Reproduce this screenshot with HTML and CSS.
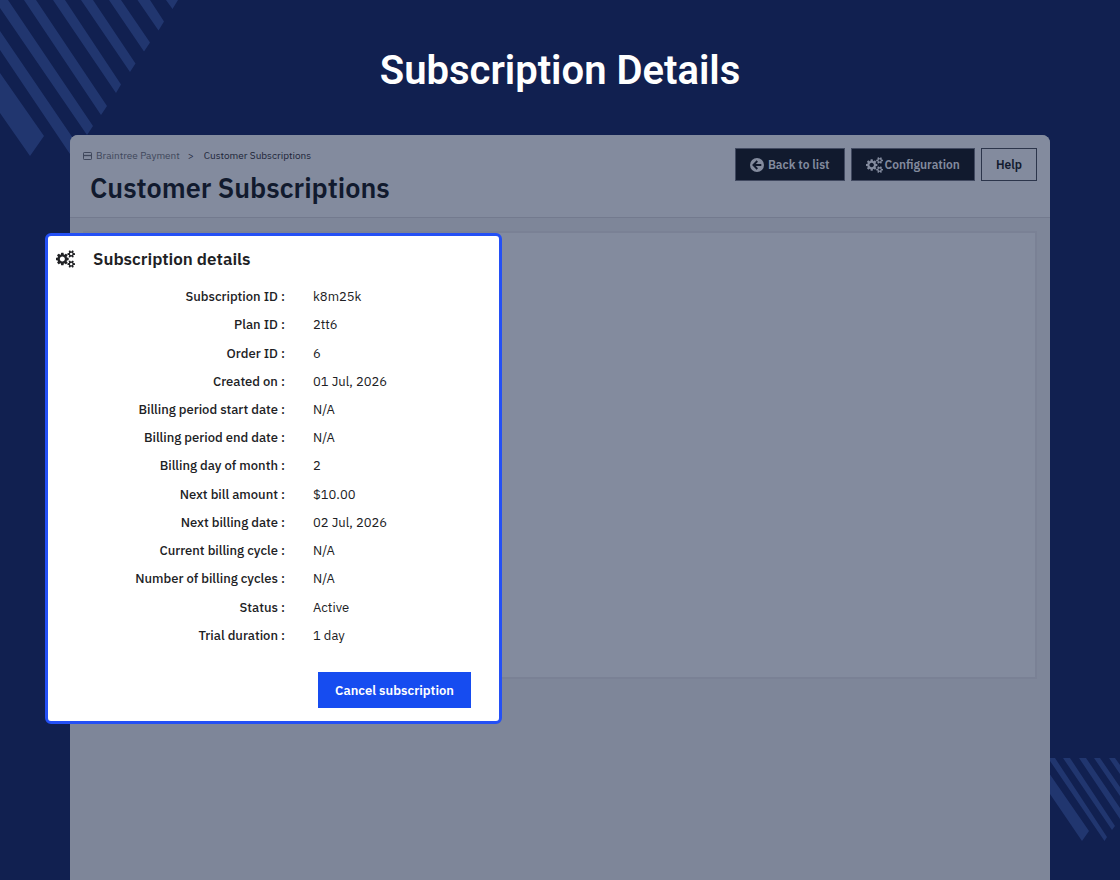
FILE: index.html
```html
<!DOCTYPE html>
<html lang="en">
<head>
<meta charset="utf-8">
<title>Subscription Details</title>
<link rel="stylesheet" href="styles.css">
</head>
<body>
<svg class="symbols" aria-hidden="true">
  <symbol id="cogs" viewBox="0 0 1920 1792"><path fill="currentColor" d="M896 896q0-106-75-181t-181-75-181 75-75 181 75 181 181 75 181-75 75-181zm768 512q0-52-38-90t-90-38-90 38-38 90q0 53 37.500 90.500t90.500 37.500 90.500-37.500 37.500-90.500zm0-1024q0-52-38-90t-90-38-90 38-38 90q0 53 37.500 90.500t90.500 37.500 90.500-37.500 37.500-90.500zm-384 421v185q0 10-7 19.500t-16 10.500l-155 24q-11 35-32 76 34 48 90 115 7 11 7 20 0 12-7 19-23 30-82.500 89.500t-78.500 59.500q-11 0-21-7l-115-90q-37 19-77 31-11 108-23 155-7 24-30 24h-186q-11 0-20-7.500t-10-17.500l-23-153q-34-10-75-31l-118 89q-7 7-20 7-11 0-21-8-144-133-144-160 0-9 7-19 10-14 41-53t47-61q-23-44-35-82l-152-24q-10-1-17-9.500t-7-19.500v-185q0-10 7-19.500t16-10.500l155-24q11-35 32-76-34-48-90-115-7-11-7-20 0-12 7-20 22-30 82-89t79-59q11 0 21 7l115 90q34-18 77-32 11-108 23-154 7-24 30-24h186q11 0 20 7.500t10 17.500l23 153q34 10 75 31l118-89q8-7 20-7 11 0 21 8 144 133 144 160 0 8-7 19-12 16-42 54t-45 60q23 48 34 82l152 23q10 2 17 10.500t7 19.500zm640 533v140q0 16-149 31-12 27-30 52 51 113 51 138 0 4-4 7-122 71-124 71-8 0-46-47t-52-68q-20 2-30 2t-30-2q-14 21-52 68t-46 47q-2 0-124-71-4-3-4-7 0-25 51-138-18-25-30-52-149-15-149-31v-140q0-16 149-31 13-29 30-52-51-113-51-138 0-4 4-7 4-2 35-20t59-34 30-16q8 0 46 46.500t52 67.500q20-2 30-2t30 2q51-71 92-112l6-2q4 0 124 70 4 3 4 7 0 25-51 138 17 23 30 52 149 15 149 31zm0-1024v140q0 16-149 31-12 27-30 52 51 113 51 138 0 4-4 7-122 71-124 71-8 0-46-47t-52-68q-20 2-30 2t-30-2q-14 21-52 68t-46 47q-2 0-124-71-4-3-4-7 0-25 51-138-18-25-30-52-149-15-149-31v-140q0-16 149-31 13-29 30-52-51-113-51-138 0-4 4-7 4-2 35-20t59-34 30-16q8 0 46 46.500t52 67.500q20-2 30-2t30 2q51-71 92-112l6-2q4 0 124 70 4 3 4 7 0 25-51 138 17 23 30 52 149 15 149 31z"/></symbol>
</svg>

<svg class="stripes stripes-top" viewBox="0 0 180 160" aria-hidden="true">
  <path d="M0 73L44 136L30 156L0 113Z M0 31L79 147L72 157L0 50Z M0 0H8L93 126L87 135L0 8Z M24 0H36L107 106L101 115Z M53 0H65L121 84.500L116 93Z M81 0H93L135.500 63.500L130 72Z M109 0H121L150 42.500L144 51.500Z M137.500 0H150L164 21.500L158.500 30.500Z M166 0H178L172.500 9Z"/>
</svg>
<svg class="stripes stripes-bottom" viewBox="0 0 70 84" aria-hidden="true">
  <path d="M0 16.500L39 73L32 83L0 36Z M0 0H5L57 79L54.500 83L0 3Z M13 0H20L65 68L62 72Z M29 0H36L70 50V61Z M44 0H50L70 29V38Z M59 0H65L70 7V16Z"/>
</svg>

<h1 class="page-title">Subscription Details</h1>

<main class="window">
  <header class="window-header">
    <div class="heading">
      <nav class="breadcrumb" aria-label="Breadcrumb">
        <a class="crumb" href="#payment">
          <svg class="crumb-icon" viewBox="0 0 9 8" aria-hidden="true"><rect x=".5" y=".5" width="8" height="7" rx=".7" fill="none" stroke="currentColor"/><path d="M0 3.500H9" stroke="currentColor" stroke-width="1.300"/></svg>
          Braintree Payment</a>
        <span class="separator">&gt;</span>
        <a class="crumb crumb-current" href="#subscriptions">Customer Subscriptions</a>
      </nav>
      <h2 class="window-title">Customer Subscriptions</h2>
    </div>
    <div class="actions">
      <button class="button button-dark" type="button">
        <svg class="back-icon" viewBox="0 0 14 14" aria-hidden="true"><circle cx="7" cy="7" r="7" fill="currentColor"/><path d="M7.300 3L3.400 7L7.300 11M3.700 7H11.300" fill="none" stroke="#111a2e" stroke-width="1.900"/></svg>
        Back to list</button>
      <button class="button button-dark button-config" type="button"><svg class="config-icon" aria-hidden="true"><use href="#cogs"/></svg>Configuration</button>
      <button class="button button-outline" type="button">Help</button>
    </div>
  </header>
  <div class="window-body">
    <div class="content-card"></div>
  </div>

  <section class="dialog" role="dialog" aria-labelledby="dialog-title">
    <header class="dialog-header">
      <svg class="dialog-icon" aria-hidden="true"><use href="#cogs"/></svg>
      <h3 class="dialog-title" id="dialog-title">Subscription details</h3>
    </header>
    <dl class="details">
      <dt>Subscription ID :</dt><dd>k8m25k</dd>
      <dt>Plan ID :</dt><dd>2tt6</dd>
      <dt>Order ID :</dt><dd>6</dd>
      <dt>Created on :</dt><dd>01 Jul, 2026</dd>
      <dt>Billing period start date :</dt><dd>N/A</dd>
      <dt>Billing period end date :</dt><dd>N/A</dd>
      <dt>Billing day of month :</dt><dd>2</dd>
      <dt>Next bill amount :</dt><dd>$10.00</dd>
      <dt>Next billing date :</dt><dd>02 Jul, 2026</dd>
      <dt>Current billing cycle :</dt><dd>N/A</dd>
      <dt>Number of billing cycles :</dt><dd>N/A</dd>
      <dt>Status :</dt><dd>Active</dd>
      <dt>Trial duration :</dt><dd>1 day</dd>
    </dl>
    <footer class="dialog-footer">
      <button class="button-primary" type="button">Cancel subscription</button>
    </footer>
  </section>
</main>
</body>
</html>
```
FILE: styles.css
```css
* { box-sizing: border-box; }

body {
  position: relative;
  display: flex;
  flex-direction: column;
  min-height: 100vh;
  margin: 0;
  background: #112050;
  color: #111a2e;
  font-family: "IBM Plex Sans", Roboto, "Liberation Sans", sans-serif;
}

h1, h2, h3, dl, dd { margin: 0; }

.symbols {
  position: absolute;
  width: 0;
  height: 0;
}

.stripes {
  position: absolute;
  fill: #21366f;
}

.stripes-top {
  top: 0;
  left: 0;
  width: 180px;
}

.stripes-bottom {
  right: 0;
  bottom: 38px;
  width: 70px;
}

.page-title {
  position: relative;
  padding: 47px 24px 40px;
  color: #fff;
  font: 600 40px/48px Roboto, sans-serif;
  text-align: center;
}

.window {
  position: relative;
  display: flex;
  flex: 1;
  flex-direction: column;
  margin: 0 70px;
  border-radius: 8px 8px 0 0;
  background: #7e8699;
}

.window-header {
  display: flex;
  justify-content: space-between;
  min-height: 83px;
  padding: 13px 13px 11px;
  border-bottom: 1px solid #737a8e;
  border-radius: 8px 8px 0 0;
  background: #838b9e;
}

.breadcrumb {
  display: flex;
  align-items: center;
  gap: 8px;
  font-size: 10px;
  line-height: 16px;
}

.crumb {
  display: flex;
  align-items: center;
  gap: 4px;
  color: #3f475b;
  text-decoration: none;
}

.crumb-current { color: #1c2438; }

.separator {
  width: 8px;
  color: #1c2438;
}

.crumb-icon {
  width: 9px;
  height: 8px;
}

.window-title {
  padding: 6px 7px 0;
  font-size: 27px;
  font-weight: 600;
  line-height: 36px;
}

.actions {
  display: flex;
  align-items: flex-start;
  gap: 6px;
}

.button {
  display: flex;
  align-items: center;
  justify-content: center;
  height: 33px;
  padding: 0 14px;
  border: 1px solid #414960;
  font: inherit;
  font-size: 12px;
  font-weight: 600;
}

.button-dark {
  gap: 4px;
  background: #111a2e;
  color: #838b9e;
}

.button-config { gap: 2px; }

.button-outline {
  border: 1px solid #2c354b;
  background: #838b9e;
  color: #111a2e;
}

.back-icon {
  width: 14px;
  height: 14px;
}

.config-icon {
  width: 17px;
  height: 16px;
}

.window-body { padding: 13px 13px 24px; }

.content-card {
  min-height: 448px;
  border: 2px solid #7a8195;
  background: #838b9e;
}

.dialog {
  position: absolute;
  top: 98px;
  left: -25px;
  width: 457px;
  padding: 7px 28px 13px 8px;
  border: 3px solid #2450f5;
  border-radius: 6px;
  background: #fff;
  color: #202124;
}

.dialog-header {
  display: flex;
  align-items: center;
  gap: 18px;
  height: 32px;
}

.dialog-icon {
  width: 19px;
  height: 18px;
}

.dialog-title {
  font-size: 17px;
  font-weight: 600;
  line-height: 24px;
}

.details {
  display: grid;
  grid-template-columns: 229px 1fr;
  grid-auto-rows: 1fr;
  align-items: center;
  column-gap: 28px;
  min-height: 367px;
  margin-top: 8px;
  font-size: 13px;
  line-height: 20px;
}

.details dt {
  font-weight: 500;
  text-align: right;
}

.dialog-footer {
  display: flex;
  justify-content: flex-end;
  margin-top: 22px;
}

.button-primary {
  height: 36px;
  padding: 0 17px;
  border: 0;
  background: #164cf0;
  color: #fff;
  font: inherit;
  font-size: 13px;
  font-weight: 600;
}
```
